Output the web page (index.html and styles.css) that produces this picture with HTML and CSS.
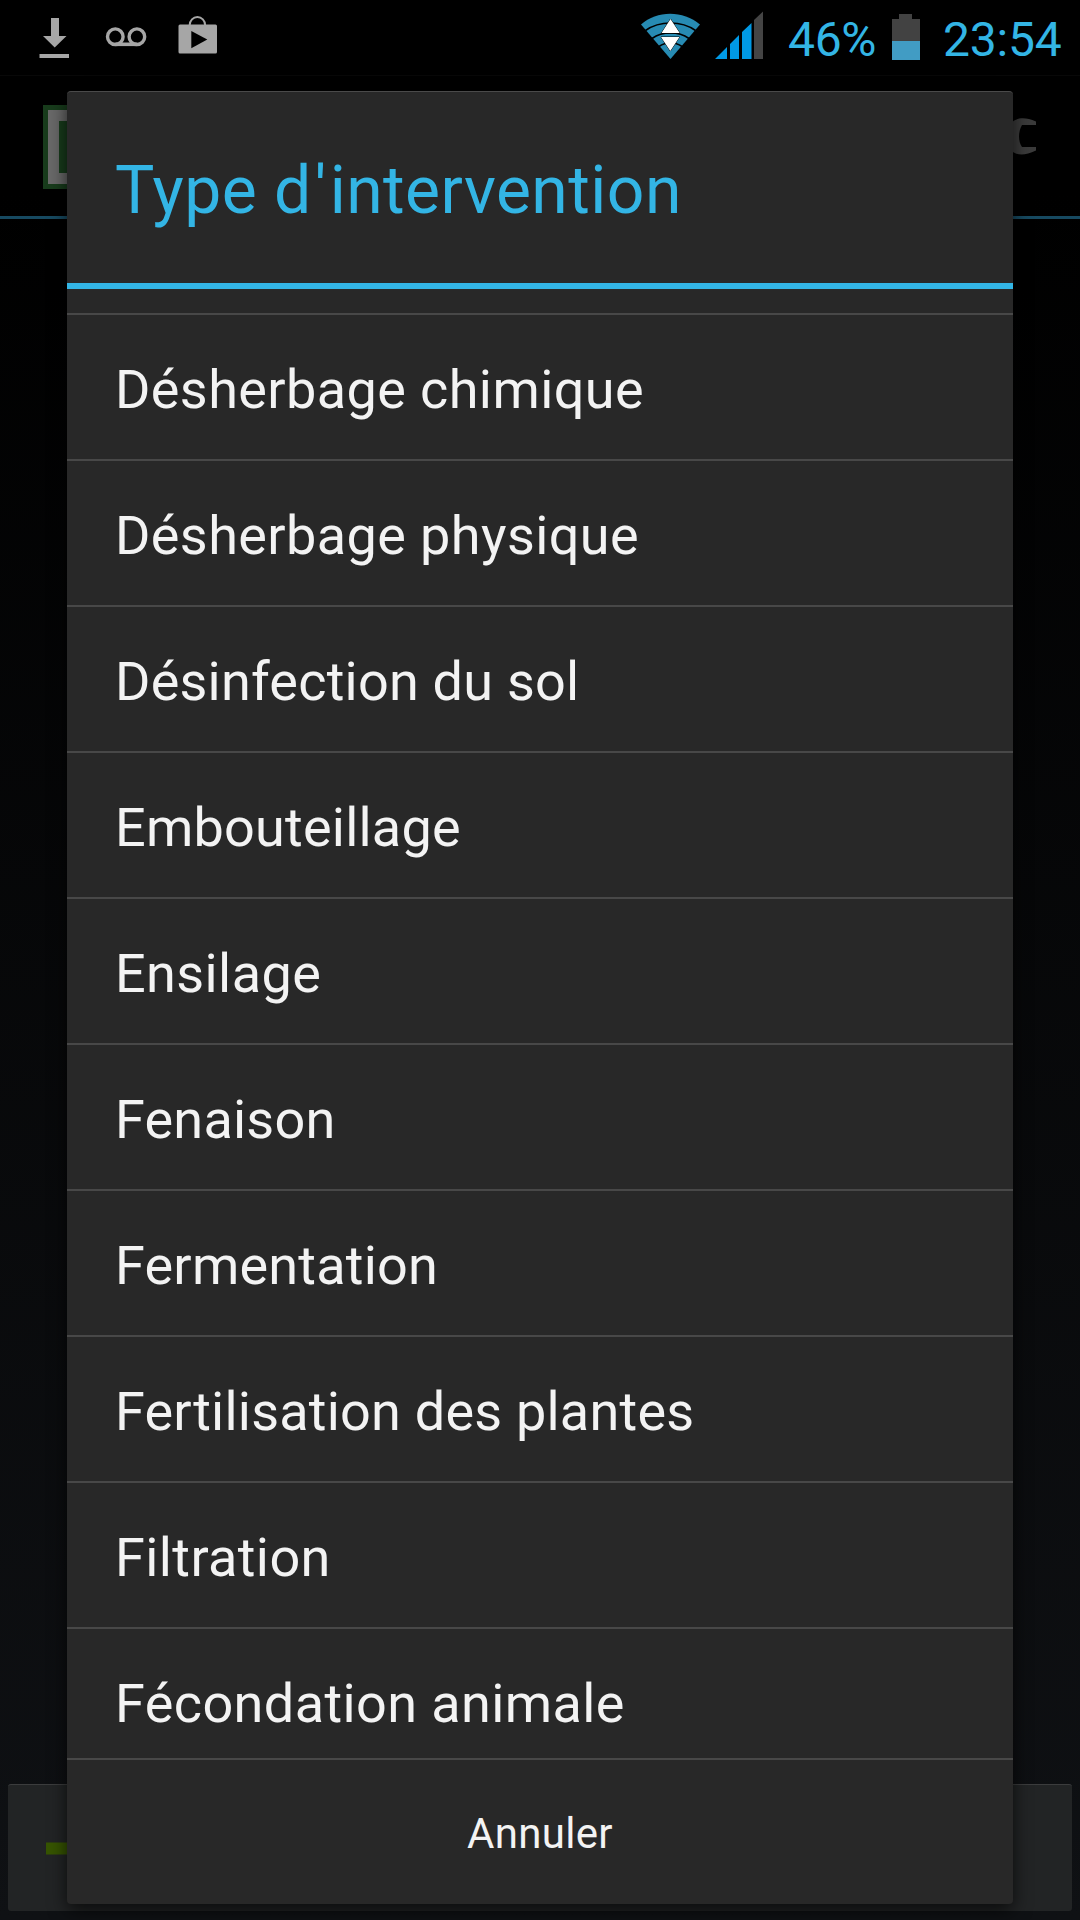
FILE: index.html
```html
<!DOCTYPE html>
<html lang="fr">
<head>
<meta charset="utf-8">
<title>Type d'intervention</title>
<link rel="stylesheet" href="styles.css">
</head>
<body>
<div class="screen">
  <header class="status">
    <svg class="notifications" width="230" height="75" viewBox="0 0 230 75">
      <g fill="#a6a6a6">
        <path d="M51 18h8v18h7.500L54.700 47.500 43 36h8z"/>
        <path d="M39.500 54h29.500v4H39.500z"/>
        <path d="M180 24.500h35.500q1.500 0 1.500 1.500v26q0 1.500-1.500 1.500h-35.500q-1.500 0-1.500-1.500V26q0-1.500 1.500-1.500z"/>
      </g>
      <g fill="none" stroke="#a6a6a6">
        <circle cx="115.300" cy="36.700" r="7.800" stroke-width="3.400"/>
        <circle cx="136.900" cy="36.700" r="7.800" stroke-width="3.400"/>
        <path d="M115.300 44.300h21.600" stroke-width="3.600"/>
        <path d="M189.700 25a7.700 8 0 0 1 15.400 0" stroke-width="2"/>
      </g>
      <path d="M191.300 31v17.200l16-8.600z" fill="#000"/>
    </svg>
    <svg class="wifi" width="62" height="75" viewBox="0 0 62 75">
      <path d="M2 24.500C18 10 44 10 61 24.500L31.500 59z" fill="#278bb3"/>
      <g fill="none" stroke="#000" stroke-width="1.600">
        <path d="M6.500 30.500c14-10 36-10 50 0"/>
        <path d="M13 38.500c10.500-7.500 26.500-7.500 37 0"/>
        <path d="M20 46.500c7-5 16-5 23 0"/>
      </g>
      <path d="M31.500 19l9.200 14H22.500zM22 37h18.500L31.300 51z" fill="#fff" stroke="#000" stroke-width="1" paint-order="stroke"/>
    </svg>
    <svg class="signal" width="48" height="75" viewBox="0 0 48 75">
      <path d="M0 59l12-12v12zM15 44l9-9v24h-9zM27 32l9.500-9v36H27z" fill="#0099e5"/>
      <path d="M39 20l9-8.500V59h-9z" fill="#444"/>
    </svg>
    <span class="percent">46%</span>
    <svg class="battery" width="28" height="75" viewBox="0 0 28 75">
      <path d="M7 14h13v5h8v22H0V19h7z" fill="#424242"/>
      <path d="M0 41h28v19H0z" fill="#419cc4"/>
    </svg>
    <span class="clock">23:54</span>
  </header>
  <div class="appbar">
    <svg width="84" height="84" viewBox="0 0 84 84">
      <path d="M0 0h84v84H0z" fill="#183c1c"/>
      <path d="M10.500 10.500h63v63h-63z" fill="none" stroke="#696969" stroke-width="11"/>
    </svg>
    <svg class="wrench" width="50" height="40" viewBox="0 0 50 40">
      <path d="M0 14h20C22 4 32-3 49 4.500v3.500H35c-4 7-4 16 0 22h14v3.500C32 42 22 36 20 25H0z" fill="#3b3b3b"/>
    </svg>
  </div>
  <main class="content"></main>
  <footer class="add">
    <svg width="54" height="54" viewBox="0 0 54 54">
      <path d="M0 21.500h21V2h13v19.500h20v12H34V53H21V33.500H0z" fill="#365400"/>
    </svg>
  </footer>
  <section class="dialog">
    <h1 class="title">Type d<span class="apostrophe">'</span>intervention</h1>
    <ul class="list">
      <li class="tail"></li>
      <li class="loose">Désherbage chimique</li>
      <li class="loose">Désherbage physique</li>
      <li>Désinfection du sol</li>
      <li>Embouteillage</li>
      <li class="loose">Ensilage</li>
      <li>Fenaison</li>
      <li>Fermentation</li>
      <li>Fertilisation des plantes</li>
      <li class="loose">Filtration</li>
      <li class="loose">Fécondation animale</li>
    </ul>
    <button class="cancel">Annuler</button>
  </section>
</div>
</body>
</html>
```
FILE: styles.css
```css
* { box-sizing: border-box; }
body {
  margin: 0;
  background: #000;
  font-family: Roboto, "Liberation Sans", sans-serif;
}
.screen {
  position: relative;
  display: flex;
  flex-direction: column;
  width: 1080px;
  height: 1920px;
  overflow: hidden;
  padding-bottom: 9px;
  background: linear-gradient(#000 10%, #0f1114);
}
.status {
  display: flex;
  height: 76px;
  padding-right: 18px;
  border-bottom: 1px solid #080808;
  background: #000;
  color: #33b5e5;
  font-size: 48px;
  line-height: 79px;
  white-space: nowrap;
}
.status svg { flex: none; }
.wifi { margin-left: 409px; }
.signal { margin-left: 14px; }
.percent { margin-left: 25px; letter-spacing: -.3px; }
.battery { margin-left: auto; }
.clock { width: 119px; margin-left: 23px; letter-spacing: -.2px; }
.appbar {
  display: flex;
  justify-content: space-between;
  height: 143px;
  padding: 29px 43px 0;
  border-bottom: 3px solid #174a61;
}
.wrench { margin-top: 12px; }
.content { flex: 1; }
.add {
  display: flex;
  align-items: center;
  height: 127px;
  margin: 0 8px;
  padding-left: 38px;
  border-top: 1px solid #3b3c3d;
  border-radius: 3px;
  background: #222425;
}
.dialog {
  position: absolute;
  top: 91px;
  left: 67px;
  display: flex;
  flex-direction: column;
  width: 946px;
  height: 1813px;
  border-top: 1px solid #4a4a4a;
  border-radius: 4px;
  background: #282828;
  box-shadow: 0 6px 18px rgba(0, 0, 0, .7);
  color: #f3f3f3;
}
.title {
  height: 197px;
  margin: 0;
  padding-left: 48px;
  border-bottom: 6px solid #33b5e5;
  color: #33b5e5;
  font-size: 66px;
  font-weight: 400;
  letter-spacing: .45px;
  line-height: 197px;
}
.apostrophe { padding: 0 3px; }
.list {
  height: 1469px;
  margin: 0;
  padding: 0;
  overflow: hidden;
  list-style: none;
  font-size: 54px;
  letter-spacing: .22px;
  line-height: 149px;
}
.list li {
  height: 146px;
  padding-left: 48px;
  border-bottom: 2px solid #484848;
}
.list .tail { height: 26px; }
.list .loose { letter-spacing: .4px; }
.cancel {
  flex: 1;
  padding: 3px 0 0;
  border: 0;
  border-top: 2px solid #484848;
  background: none;
  color: inherit;
  font: 42px Roboto, "Liberation Sans", sans-serif;
  letter-spacing: .3px;
}
```
